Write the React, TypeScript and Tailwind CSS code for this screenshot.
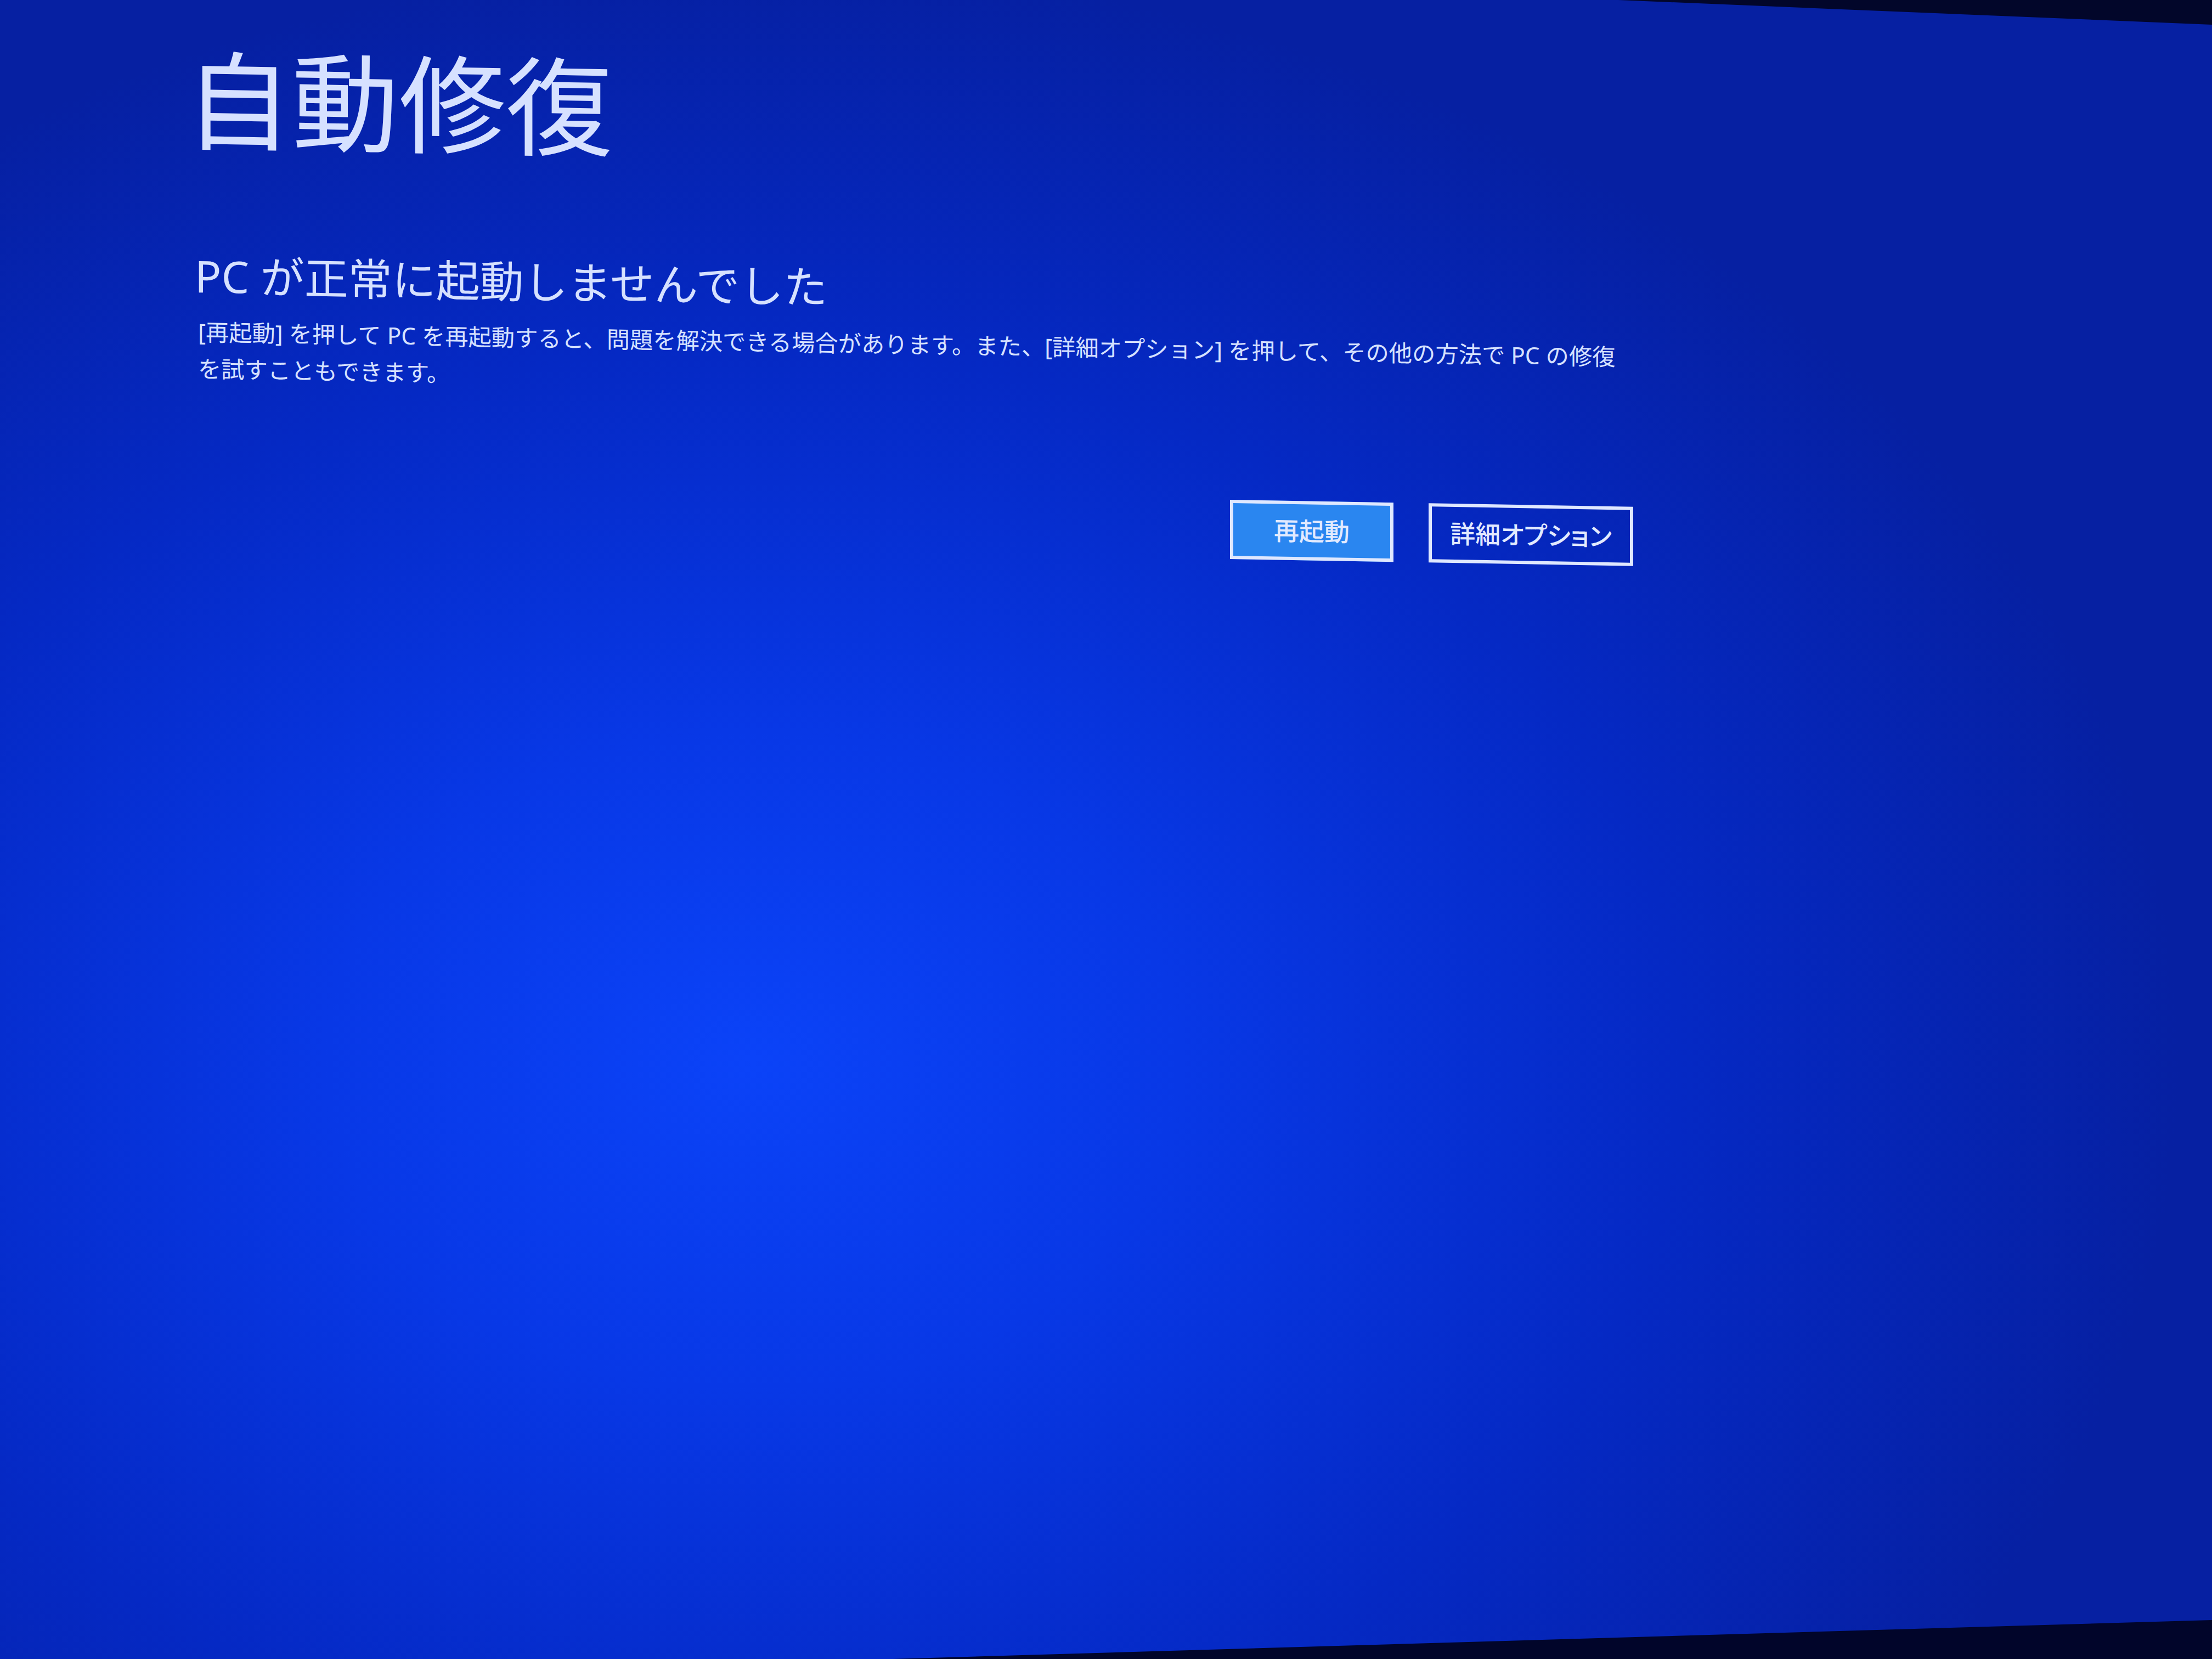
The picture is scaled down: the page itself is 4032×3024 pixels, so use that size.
import React from 'react';

const font = "font-['Noto_Sans','Noto_Sans_CJK_JP',sans-serif]";

const RepairButton = ({ label, primary }: { label: string; primary?: boolean }) => (
  <button
    className={`h-[108px] border-[6px] border-[#dfe8ff] flex items-center justify-center text-[46px] leading-none font-medium text-[#e2eaff] [font-feature-settings:'palt'] ${
      primary ? 'w-[298px] bg-[#2a86f0]' : 'w-[373px] bg-transparent'
    }`}
  >
    {label}
  </button>
);

export default function App() {
  return (
    <div
      className={`relative w-[4032px] h-[3024px] overflow-hidden bg-[radial-gradient(ellipse_2600px_2000px_at_34%_64%,#0b43f8_0%,#0838e6_30%,#0529c4_65%,#0620a2_100%)] ${font}`}
    >
      <div className="w-[2622px] ml-[355px] pt-[84px] flex flex-col skew-y-[1deg] origin-left">
        <h1 className="-ml-[18px] text-[195px] leading-none font-normal text-[#d6e1ff] whitespace-nowrap">自動修復</h1>

        <h2 className="mt-[183px] text-[80px] leading-none text-[#d6e1ff] whitespace-nowrap">
          PC が正常に起動しませんでした
        </h2>

        <p className="mt-[29px] ml-[6px] text-[42.3px] leading-[67px] text-[#d6e1ff]">
          <span className="block whitespace-nowrap">
            [再起動] を押して PC を再起動すると、問題を解決できる場合があります。また、[詳細オプション] を押して、その他の方法で PC の修復
          </span>
          <span className="block whitespace-nowrap">を試すこともできます。</span>
        </p>

        <div className="mt-[173px] flex justify-end gap-[64px]">
          <RepairButton label="再起動" primary />
          <RepairButton label="詳細オプション" />
        </div>
      </div>

      {/* monitor bezel edges caught in the photo */}
      <svg className="absolute inset-0 pointer-events-none" width="4032" height="3024" viewBox="0 0 4032 3024">
        <polygon points="2950,0 4032,0 4032,45" fill="#02062a" />
        <polygon points="1627,3024 4032,2953 4032,3024" fill="#01052a" />
      </svg>
    </div>
  );
}
